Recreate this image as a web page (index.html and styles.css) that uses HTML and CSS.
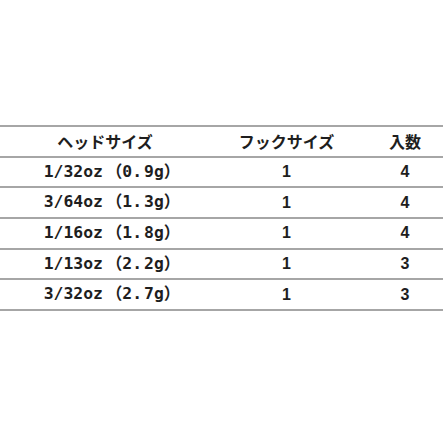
FILE: index.html
```html
<!DOCTYPE html>
<html lang="ja">
<head>
<meta charset="utf-8">
<link rel="stylesheet" href="styles.css">
</head>
<body>
<div class="spec">
  <div class="row head">
    <div class="c1">ヘッドサイズ</div>
    <div class="c2">フックサイズ</div>
    <div class="c3">入数</div>
  </div>
  <div class="row">
    <div class="c1 mono">1/32oz<span class="par">（0.<span class="gap">9g）</span></span></div>
    <div class="c2 num">1</div>
    <div class="c3 num">4</div>
  </div>
  <div class="row">
    <div class="c1 mono">3/64oz<span class="par">（1.<span class="gap">3g）</span></span></div>
    <div class="c2 num">1</div>
    <div class="c3 num">4</div>
  </div>
  <div class="row">
    <div class="c1 mono">1/16oz<span class="par">（1.<span class="gap">8g）</span></span></div>
    <div class="c2 num">1</div>
    <div class="c3 num">4</div>
  </div>
  <div class="row">
    <div class="c1 mono">1/13oz<span class="par">（2.<span class="gap">2g）</span></span></div>
    <div class="c2 num">1</div>
    <div class="c3 num">3</div>
  </div>
  <div class="row last">
    <div class="c1 mono">3/32oz<span class="par">（2.<span class="gap">7g）</span></span></div>
    <div class="c2 num">1</div>
    <div class="c3 num">3</div>
  </div>
</div>
</body>
</html>
```
FILE: styles.css
```css
html, body {
  margin: 0;
  padding: 0;
  background: #ffffff;
}
body {
  width: 443px;
  height: 443px;
  overflow: hidden;
  color: #1e1e1e;
  font-family: "Noto Sans CJK JP", sans-serif;
}
.spec {
  margin-top: 125px;
  width: 443px;
}
.row {
  display: grid;
  grid-template-columns: 210px 153px 80px;
  align-items: center;
  height: 28.67px;
  border-top: 2px solid #a6a6a6;
}
.row.last {
  border-bottom: 2px solid #a6a6a6;
}
.row > div {
  text-align: center;
  white-space: nowrap;
}
.head > div {
  font-family: "Noto Sans CJK JP", sans-serif;
  font-weight: 700;
  font-size: 16px;
  line-height: 1;
}
.mono {
  font-family: "DejaVu Sans Mono", "Noto Sans CJK JP", monospace;
  font-weight: 700;
  font-size: 16.4px;
  line-height: 1;
  padding-left: 14px;
}
.par {
  margin-left: 3px;
}
.gap {
  margin-left: 2px;
}
.num {
  font-family: "Liberation Sans", Arial, sans-serif;
  font-weight: 700;
  font-size: 16px;
  line-height: 1;
}
.c3 {
  padding-left: 4px;
}
```
